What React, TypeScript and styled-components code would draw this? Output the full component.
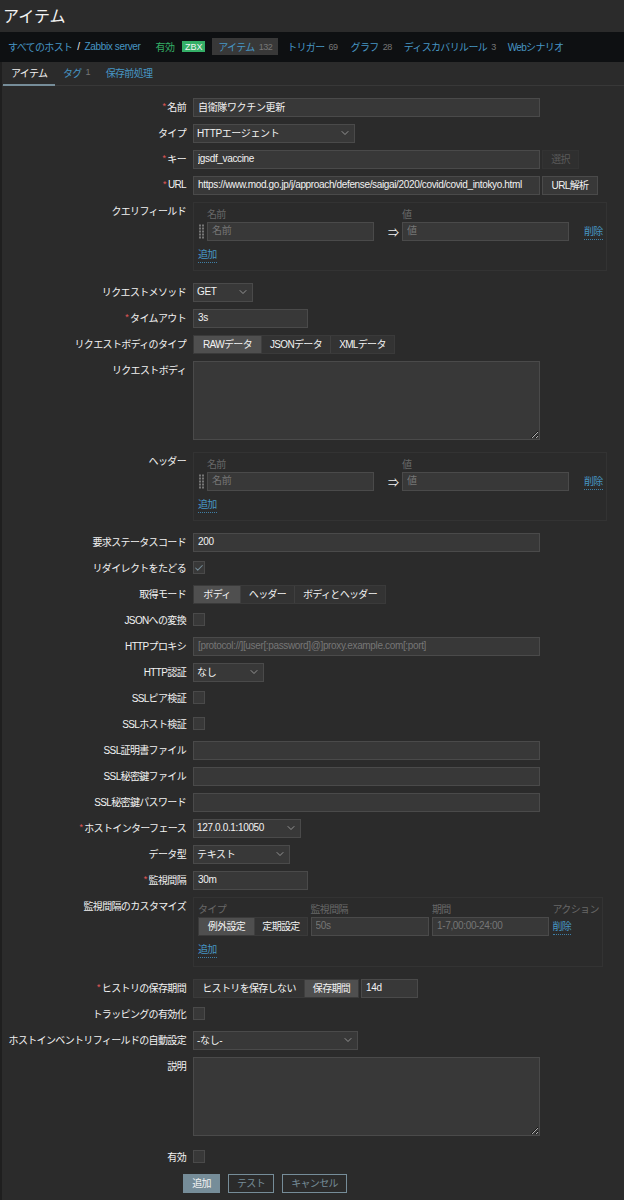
import React from 'react';
import styled, { createGlobalStyle } from 'styled-components';
import { ChevronDown, Check } from 'lucide-react';

const GlobalStyle = createGlobalStyle`
  html, body {
    margin: 0;
    padding: 0;
    background: #2b2b2b;
    color-scheme: dark;
  }
  body, input, textarea, button {
    font-family: 'Liberation Sans', 'Noto Sans CJK JP', sans-serif;
    font-size: 10px;
    letter-spacing: -0.65px;
  }
  * {
    box-sizing: border-box;
  }
`;

const Page = styled.div`
  width: 624px;
  height: 1200px;
  overflow: hidden;
  background: #2b2b2b;
  color: #f2f2f2;
`;

const TitleBar = styled.header`
  height: 32px;
  padding: 0 0 3px 3px;
  display: flex;
  align-items: center;
`;

const Title = styled.h1`
  margin: 0;
  font-size: 16px;
  font-weight: 400;
  letter-spacing: 0;
  color: #f2f2f2;
`;

const NavBar = styled.nav`
  height: 30px;
  padding: 0 0 1px 8px;
  display: flex;
  align-items: center;
  background: #0e1012;
`;

const NavLink = styled.a<{ $latin?: boolean }>`
  color: #4796c4;
  white-space: nowrap;
  letter-spacing: ${(p) => (p.$latin ? '-0.35px' : '-0.65px')};
`;

const NavSep = styled.span`
  margin: 0 5px;
  color: #f2f2f2;
`;

const StatusText = styled.span`
  margin-left: 15px;
  color: #34af67;
`;

const Badge = styled.span`
  margin-left: 8px;
  width: 23px;
  height: 11px;
  display: flex;
  align-items: center;
  justify-content: center;
  background: #34af67;
  color: #f2f2f2;
  font-size: 9px;
  letter-spacing: 0;
`;

const NavItem = styled.span<{ $active?: boolean; $gap?: number }>`
  margin-left: ${(p) => p.$gap ?? 0}px;
  height: 17px;
  padding: 0 6px;
  display: flex;
  align-items: center;
  gap: 4px;
  color: #4796c4;
  background: ${(p) => (p.$active ? '#383838' : 'transparent')};
  white-space: nowrap;
`;

const Count = styled.small`
  font-size: 9px;
  letter-spacing: -0.5px;
  color: #767676;
`;

const Main = styled.main`
  border-left: 2px solid #1f1f1f;
  height: 1138px;
`;

const TabBar = styled.div`
  height: 24px;
  display: flex;
  padding-left: 1px;
  border-bottom: 1px solid #383838;
`;

const Tab = styled.div<{ $active?: boolean }>`
  height: 24px;
  padding: 0 7.5px 2px 8px;
  display: flex;
  align-items: center;
  gap: 4px;
  color: ${(p) => (p.$active ? '#f2f2f2' : '#4796c4')};
  border-bottom: 2px solid ${(p) => (p.$active ? '#768d99' : 'transparent')};
`;

const Form = styled.form`
  padding-top: 12px;
  display: flex;
  flex-direction: column;
  gap: 7px;
`;

const Row = styled.div<{ $tall?: boolean }>`
  display: grid;
  grid-template-columns: 184px 1fr;
  column-gap: 7px;
  margin-bottom: ${(p) => (p.$tall ? 5 : 0)}px;
`;

const Label = styled.label`
  height: 19px;
  padding-bottom: 3px;
  display: flex;
  align-items: center;
  justify-content: flex-end;
  white-space: nowrap;
  color: #f2f2f2;
`;

const Star = styled.span`
  margin-right: 2px;
  color: #e45959;
  font-size: 9px;
`;

const Field = styled.div`
  display: flex;
  align-items: flex-start;
  gap: 2px;
`;

const TextInput = styled.input<{ $w?: number }>`
  width: ${(p) => p.$w ?? 347}px;
  height: 19px;
  padding: 0 0 2px 4px;
  background: #383838;
  border: 1px solid #4a4a4a;
  border-radius: 0;
  color: #f2f2f2;
  letter-spacing: -0.35px;
  outline: none;
  &::placeholder {
    color: #767676;
    opacity: 1;
  }
`;

const TextArea = styled.textarea`
  width: 347px;
  height: 79px;
  display: block;
  padding: 4px;
  background: #383838;
  border: 1px solid #4a4a4a;
  border-radius: 0;
  resize: both;
  outline: none;
`;

const SelectBox = styled.div<{ $w: number }>`
  width: ${(p) => p.$w}px;
  height: 19px;
  padding: 0 3px 2px 3px;
  display: flex;
  align-items: center;
  justify-content: space-between;
  background: #383838;
  border: 1px solid #4a4a4a;
  color: #f2f2f2;
  letter-spacing: -0.35px;
  svg {
    color: #b0b0b0;
  }
`;

const SmallButton = styled.button<{ $disabled?: boolean; $w: number }>`
  width: ${(p) => p.$w}px;
  height: 19px;
  padding: 0 0 2px;
  border: 1px solid ${(p) => (p.$disabled ? '#333333' : '#4a4a4a')};
  background: ${(p) => (p.$disabled ? '#2f2f2f' : '#383838')};
  color: ${(p) => (p.$disabled ? '#5a5a5a' : '#f2f2f2')};
`;

const Segments = styled.div`
  height: 19px;
  display: inline-flex;
  border: 1px solid #3a3a3a;
  background: #333333;
`;

const Segment = styled.div<{ $on?: boolean; $w: number }>`
  width: ${(p) => p.$w}px;
  padding-bottom: 2px;
  display: flex;
  align-items: center;
  justify-content: center;
  white-space: nowrap;
  background: ${(p) => (p.$on ? '#4f4f4f' : 'transparent')};
  color: #f2f2f2;
  & + & {
    border-left: 1px solid #3f3f3f;
  }
`;

const CheckWrap = styled.div`
  height: 19px;
  padding-top: 2px;
  display: flex;
  align-items: flex-start;
`;

const CheckBox = styled.span`
  width: 12px;
  height: 13px;
  display: flex;
  align-items: center;
  justify-content: center;
  background: #383838;
  border: 1px solid #4a4a4a;
  color: #768d99;
`;

const Group = styled.div<{ $w: number; $h: number }>`
  width: ${(p) => p.$w}px;
  height: ${(p) => p.$h}px;
  padding: 3px 0 0 4px;
  border: 1px solid #333333;
`;

const PairGrid = styled.div<{ $columns: string; $gap?: number }>`
  display: grid;
  grid-template-columns: ${(p) => p.$columns};
  column-gap: ${(p) => p.$gap ?? 0}px;
  align-items: center;
  justify-items: start;
`;

const ColHead = styled.span`
  height: 16px;
  padding-bottom: 2px;
  display: flex;
  align-items: center;
  color: #686868;
  white-space: nowrap;
`;

const Handle = styled.svg`
  display: block;
  margin-left: 1px;
  color: #767676;
`;

const Arrow = styled.span`
  padding-left: 14px;
  color: #f2f2f2;
  font-size: 11px;
`;

const LinkText = styled.a`
  display: inline-block;
  line-height: 15px;
  color: #4796c4;
  border-bottom: 1px dotted #3f7fa6;
`;

const AddRow = styled.div`
  margin-top: 6px;
`;

const Actions = styled.div`
  padding-left: 181px;
  display: flex;
  gap: 8px;
`;

const ActionButton = styled.button<{ $primary?: boolean; $w: number }>`
  width: ${(p) => p.$w}px;
  height: 19px;
  padding: 0 0 2px;
  border: 1px solid #768d99;
  background: ${(p) => (p.$primary ? '#768d99' : 'transparent')};
  color: ${(p) => (p.$primary ? '#f2f2f2' : '#768d99')};
`;

function FieldRow({
  label,
  required,
  tall,
  children,
}: {
  label: string;
  required?: boolean;
  tall?: boolean;
  children: React.ReactNode;
}) {
  return (
    <Row $tall={tall}>
      <Label>
        {required && <Star>*</Star>}
        {label}
      </Label>
      <Field>{children}</Field>
    </Row>
  );
}

function Select({ width, value }: { width: number; value: string }) {
  return (
    <SelectBox $w={width}>
      {value}
      <ChevronDown size={12} strokeWidth={1.5} />
    </SelectBox>
  );
}

function Checkbox({ checked }: { checked?: boolean }) {
  return (
    <CheckWrap>
      <CheckBox>{checked && <Check size={10} strokeWidth={2.5} />}</CheckBox>
    </CheckWrap>
  );
}

function DragHandle() {
  const dots = [0, 1, 2, 3, 4];
  return (
    <Handle width="5" height="15" viewBox="0 0 5 15" fill="currentColor">
      {dots.map((d) => (
        <React.Fragment key={d}>
          <rect x="0" y={d * 3 + 0.5} width="2" height="2" />
          <rect x="3" y={d * 3 + 0.5} width="2" height="2" />
        </React.Fragment>
      ))}
    </Handle>
  );
}

function PairTable() {
  return (
    <Group $w={414} $h={69}>
      <PairGrid $columns="9px 167px 28px 167px 15px auto">
        <span />
        <ColHead>名前</ColHead>
        <span />
        <ColHead>値</ColHead>
        <span />
        <span />
        <DragHandle />
        <TextInput $w={167} placeholder="名前" readOnly />
        <Arrow>⇒</Arrow>
        <TextInput $w={167} placeholder="値" readOnly />
        <span />
        <LinkText>削除</LinkText>
      </PairGrid>
      <AddRow>
        <LinkText>追加</LinkText>
      </AddRow>
    </Group>
  );
}

export default function App() {
  return (
    <Page>
      <GlobalStyle />
      <TitleBar>
        <Title>アイテム</Title>
      </TitleBar>
      <NavBar>
        <NavLink>すべてのホスト</NavLink>
        <NavSep>/</NavSep>
        <NavLink $latin>Zabbix server</NavLink>
        <StatusText>有効</StatusText>
        <Badge>ZBX</Badge>
        <NavItem $active $gap={7}>
          アイテム <Count>132</Count>
        </NavItem>
        <NavItem $gap={3}>
          トリガー <Count>69</Count>
        </NavItem>
        <NavItem $gap={1}>
          グラフ <Count>28</Count>
        </NavItem>
        <NavItem>
          ディスカバリルール <Count>3</Count>
        </NavItem>
        <NavItem>Webシナリオ</NavItem>
      </NavBar>
      <Main>
        <TabBar>
          <Tab $active>アイテム</Tab>
          <Tab>
            タグ <Count>1</Count>
          </Tab>
          <Tab>保存前処理</Tab>
        </TabBar>
        <Form>
          <FieldRow label="名前" required>
            <TextInput value="自衛隊ワクチン更新" readOnly />
          </FieldRow>
          <FieldRow label="タイプ">
            <Select width={162} value="HTTPエージェント" />
          </FieldRow>
          <FieldRow label="キー" required>
            <TextInput value="jgsdf_vaccine" readOnly />
            <SmallButton $disabled $w={37}>選択</SmallButton>
          </FieldRow>
          <FieldRow label="URL" required>
            <TextInput
              value="https://www.mod.go.jp/j/approach/defense/saigai/2020/covid/covid_intokyo.html"
              readOnly
            />
            <SmallButton $w={56}>URL解析</SmallButton>
          </FieldRow>
          <FieldRow label="クエリフィールド" tall>
            <PairTable />
          </FieldRow>
          <FieldRow label="リクエストメソッド">
            <Select width={60} value="GET" />
          </FieldRow>
          <FieldRow label="タイムアウト" required>
            <TextInput $w={115} value="3s" readOnly />
          </FieldRow>
          <FieldRow label="リクエストボディのタイプ">
            <Segments>
              <Segment $on $w={67}>RAWデータ</Segment>
              <Segment $w={69}>JSONデータ</Segment>
              <Segment $w={64}>XMLデータ</Segment>
            </Segments>
          </FieldRow>
          <FieldRow label="リクエストボディ" tall>
            <TextArea readOnly />
          </FieldRow>
          <FieldRow label="ヘッダー" tall>
            <PairTable />
          </FieldRow>
          <FieldRow label="要求ステータスコード">
            <TextInput value="200" readOnly />
          </FieldRow>
          <FieldRow label="リダイレクトをたどる">
            <Checkbox checked />
          </FieldRow>
          <FieldRow label="取得モード">
            <Segments>
              <Segment $on $w={46}>ボディ</Segment>
              <Segment $w={54}>ヘッダー</Segment>
              <Segment $w={91}>ボディとヘッダー</Segment>
            </Segments>
          </FieldRow>
          <FieldRow label="JSONへの変換">
            <Checkbox />
          </FieldRow>
          <FieldRow label="HTTPプロキシ">
            <TextInput placeholder="[protocol://][user[:password]@]proxy.example.com[:port]" readOnly />
          </FieldRow>
          <FieldRow label="HTTP認証">
            <Select width={71} value="なし" />
          </FieldRow>
          <FieldRow label="SSLピア検証">
            <Checkbox />
          </FieldRow>
          <FieldRow label="SSLホスト検証">
            <Checkbox />
          </FieldRow>
          <FieldRow label="SSL証明書ファイル">
            <TextInput readOnly />
          </FieldRow>
          <FieldRow label="SSL秘密鍵ファイル">
            <TextInput readOnly />
          </FieldRow>
          <FieldRow label="SSL秘密鍵パスワード">
            <TextInput readOnly />
          </FieldRow>
          <FieldRow label="ホストインターフェース" required>
            <Select width={108} value="127.0.0.1:10050" />
          </FieldRow>
          <FieldRow label="データ型">
            <Select width={97} value="テキスト" />
          </FieldRow>
          <FieldRow label="監視間隔" required>
            <TextInput $w={115} value="30m" readOnly />
          </FieldRow>
          <FieldRow label="監視間隔のカスタマイズ" tall>
            <Group $w={410} $h={70}>
              <PairGrid $columns="109px 118px 117px auto" $gap={3.5}>
                <ColHead>タイプ</ColHead>
                <ColHead>監視間隔</ColHead>
                <ColHead>期間</ColHead>
                <ColHead>アクション</ColHead>
                <Segments>
                  <Segment $on $w={55}>例外設定</Segment>
                  <Segment $w={53}>定期設定</Segment>
                </Segments>
                <TextInput $w={118} placeholder="50s" readOnly />
                <TextInput $w={117} placeholder="1-7,00:00-24:00" readOnly />
                <LinkText>削除</LinkText>
              </PairGrid>
              <AddRow>
                <LinkText>追加</LinkText>
              </AddRow>
            </Group>
          </FieldRow>
          <FieldRow label="ヒストリの保存期間" required>
            <Segments>
              <Segment $w={110}>ヒストリを保存しない</Segment>
              <Segment $on $w={54}>保存期間</Segment>
            </Segments>
            <TextInput $w={57} value="14d" readOnly />
          </FieldRow>
          <FieldRow label="トラッピングの有効化">
            <Checkbox />
          </FieldRow>
          <FieldRow label="ホストインベントリフィールドの自動設定">
            <Select width={165} value="-なし-" />
          </FieldRow>
          <FieldRow label="説明" tall>
            <TextArea readOnly />
          </FieldRow>
          <FieldRow label="有効">
            <Checkbox />
          </FieldRow>
          <Actions>
            <ActionButton $primary $w={37} type="button">追加</ActionButton>
            <ActionButton $w={46} type="button">テスト</ActionButton>
            <ActionButton $w={65} type="button">キャンセル</ActionButton>
          </Actions>
        </Form>
      </Main>
    </Page>
  );
}
